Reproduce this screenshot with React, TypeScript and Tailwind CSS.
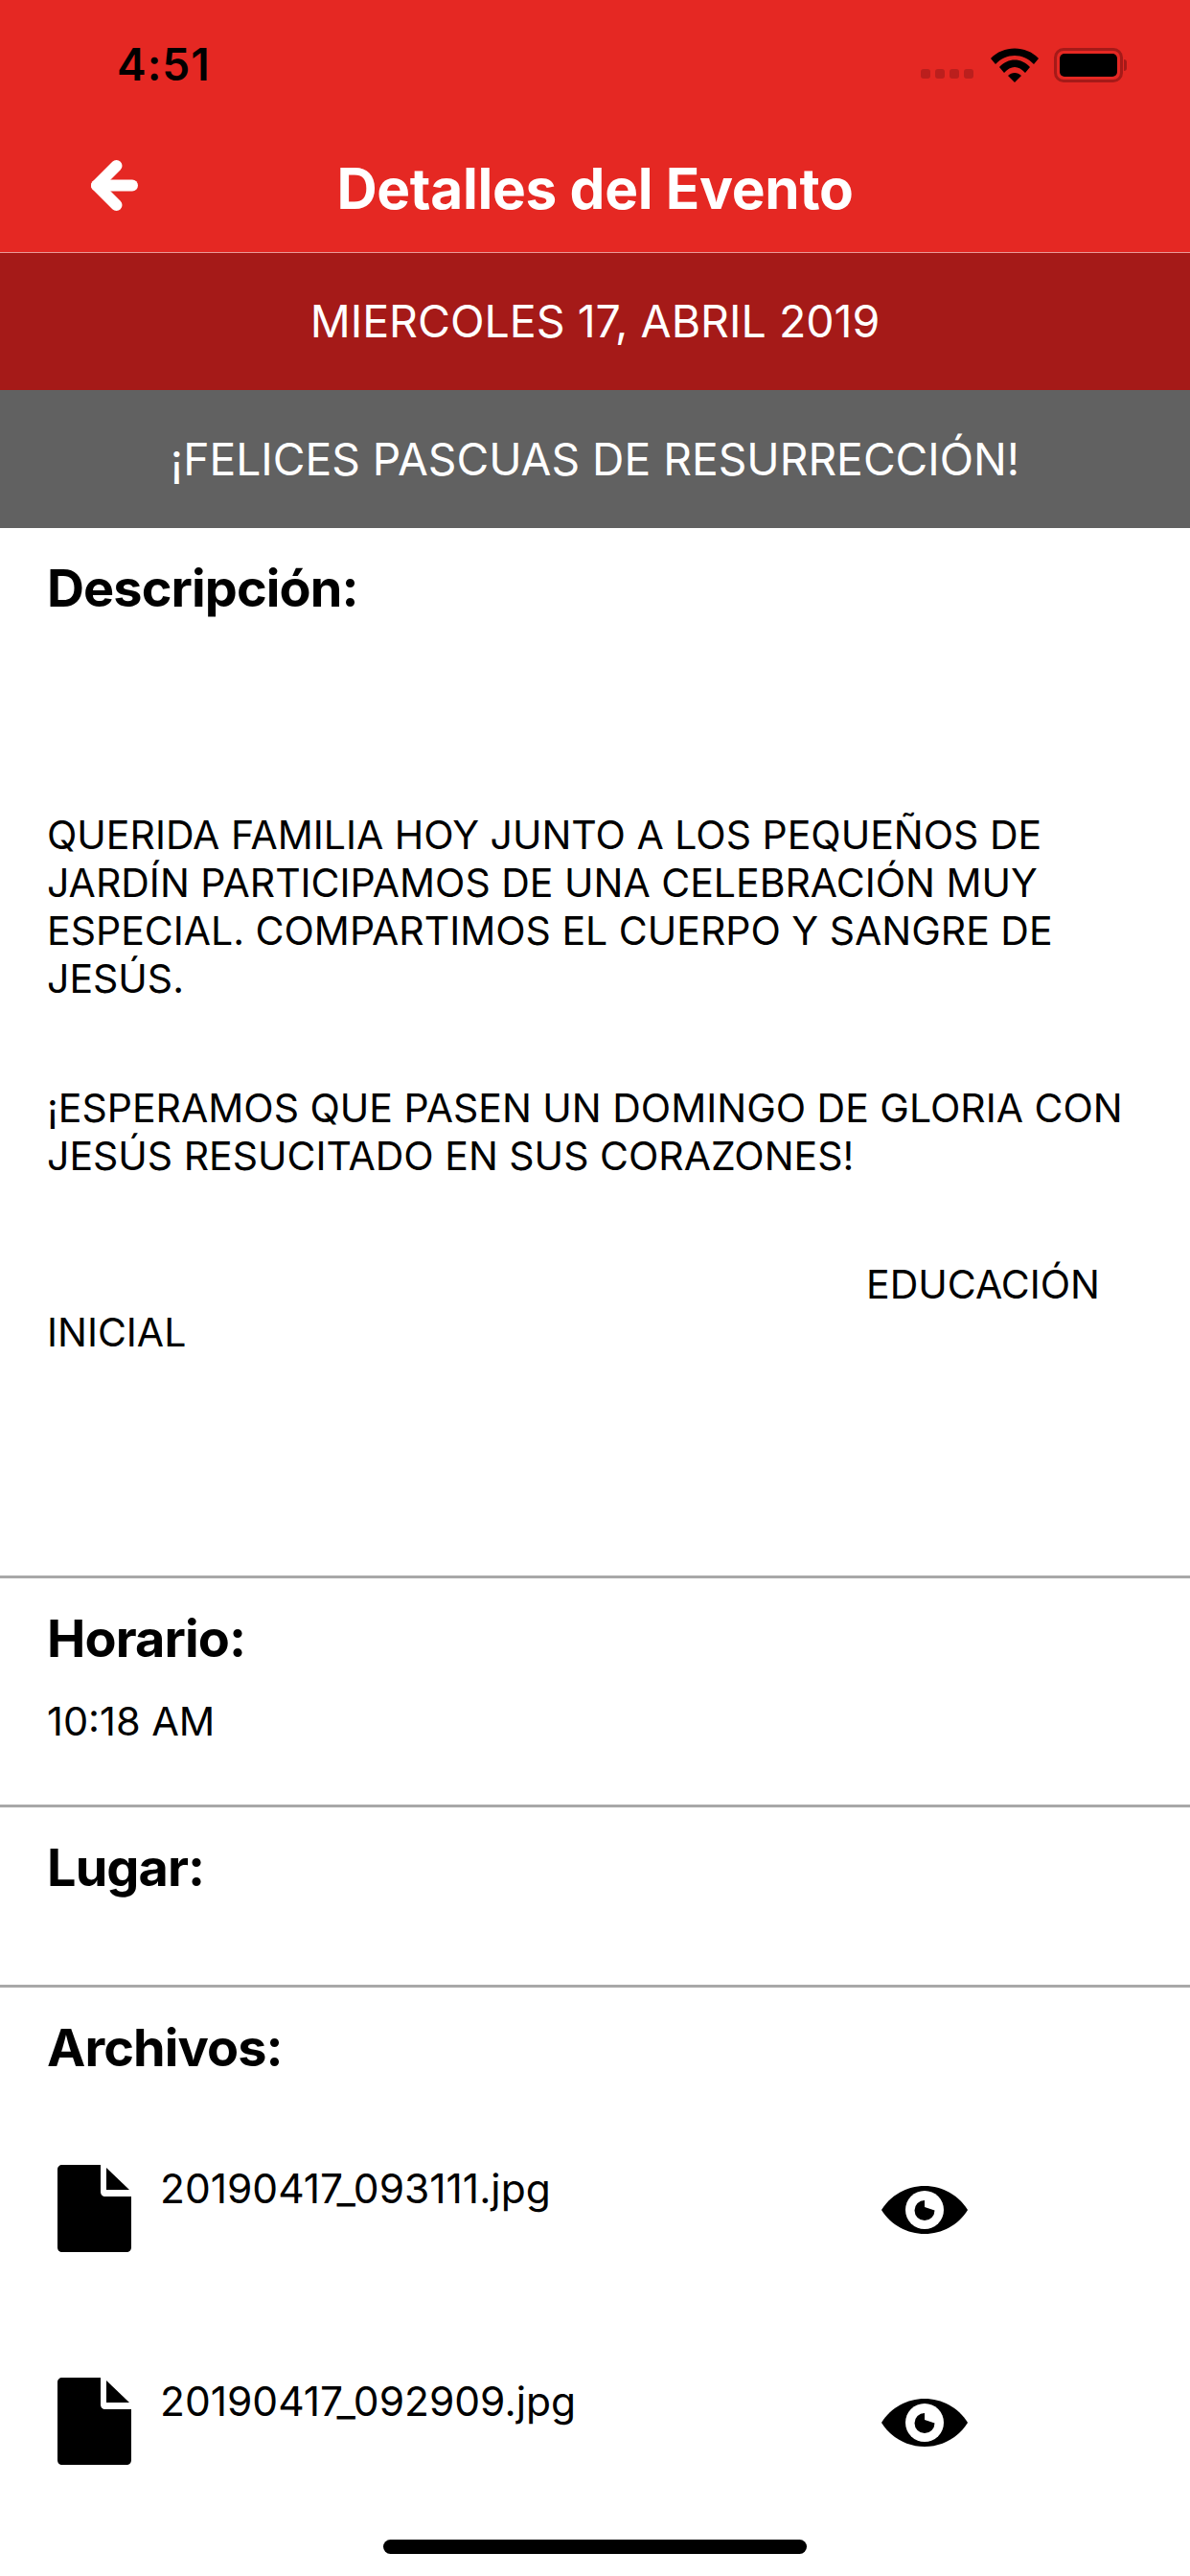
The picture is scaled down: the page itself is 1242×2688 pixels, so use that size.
import * as React from "react";

const font = { fontFamily: "Inter, 'Noto Sans', sans-serif" };

function FileIcon() {
  return (
    <svg width="77" height="91" viewBox="0 0 77 91" className="shrink-0">
      <path d="M5 0H45V28C45 31 47 33 50 33H77V86C77 89 75 91 72 91H5C2 91 0 89 0 86V5C0 2 2 0 5 0Z" fill="#000" />
      <path d="M51 3L75 26H51Z" fill="#000" />
    </svg>
  );
}

function EyeIcon() {
  return (
    <svg width="90" height="50" viewBox="0 0 90 50" className="shrink-0">
      <path d="M0 25C10 9 27 0 45 0C63 0 80 9 90 25C80 41 63 50 45 50C27 50 10 41 0 25Z" fill="#000" />
      <circle cx="45" cy="25" r="20" fill="#fff" />
      <path d="M45 15A10.500 10.500 0 1 0 55.500 25.500L45 22Z" fill="#000" />
    </svg>
  );
}

function Section({ title, className, children }: { title: string; className: string; children?: React.ReactNode }) {
  return (
    <section className={`border-b-[3px] border-[#a8a8a8] px-[49px] ${className}`}>
      <h3 className="text-[54px] leading-[60px] font-bold tracking-[-0.9px] text-black">{title}</h3>
      {children}
    </section>
  );
}

const files = ["20190417_093111.jpg", "20190417_092909.jpg"];

export default function App() {
  return (
    <div className="relative flex h-[2688px] w-[1242px] flex-col overflow-hidden bg-white" style={font}>
      <header className="h-[264px] shrink-0 border-b-[1px] border-[#e99a98] bg-[#e52823]">
        <div className="flex h-[135px] items-start justify-between pl-[122px] pr-[66px] pt-[38px]">
          <span className="text-[46px] leading-[58px] font-semibold tracking-[1px] text-black">4:51</span>
          <div className="flex items-center pt-[12px]">
            <div className="mr-[18px] mt-[18px] flex gap-[5px]">
              {[0, 1, 2, 3].map((i) => (
                <span key={i} className="h-[10px] w-[10px] rounded-[3px] bg-[#bb1f1d]" />
              ))}
            </div>
            <svg width="50" height="36" viewBox="0 0 50 36" className="mr-[16px]">
              <path d="M0 11C13 -3 37 -3 50 11L45 17C34 5 16 5 5 17Z" fill="#000" />
              <path d="M9 20C18 10 32 10 41 20L36 26C29 18 21 18 14 26Z" fill="#000" />
              <path d="M18 29C22 25 28 25 32 29L25 36Z" fill="#000" />
            </svg>
            <div className="flex items-center">
              <div className="flex h-[36px] w-[72px] rounded-[10px] border-[3px] border-[#a51a18] p-[3px]">
                <div className="h-full w-full rounded-[5px] bg-black" />
              </div>
              <div className="ml-[1px] h-[12px] w-[3px] rounded-r-[3px] bg-[#a51a18]" />
            </div>
          </div>
        </div>
        <div className="relative flex h-[128px] items-center justify-center pb-[4px]">
          <svg width="49" height="53" viewBox="0 0 49 53" className="absolute left-[95px] top-[32px]" fill="none" stroke="#fff" strokeWidth="12" strokeLinecap="round" strokeLinejoin="round">
            <path d="M26.500 6L6 26.500L26.500 47" />
            <path d="M6 26.500H43" />
          </svg>
          <h1 className="text-[58.500px] leading-[64px] font-bold tracking-[-0.3px] text-white">Detalles del Evento</h1>
        </div>
      </header>

      <div className="flex h-[143px] shrink-0 items-center justify-center bg-[#a51a18] pb-[2px]">
        <span className="text-[46.500px] leading-[54px] text-white">MIERCOLES 17, ABRIL 2019</span>
      </div>
      <div className="flex h-[144px] shrink-0 items-center justify-center bg-[#616161]">
        <span className="text-[46.200px] leading-[54px] text-white">¡FELICES PASCUAS DE RESURRECCIÓN!</span>
      </div>

      <Section title="Descripción:" className="h-[1096px] pt-[33px]">
        <div className="mt-[202px] text-[41px] leading-[50px] text-black">
          <p>
            QUERIDA FAMILIA HOY JUNTO A LOS PEQUEÑOS DE
            <br />
            JARDÍN PARTICIPAMOS DE UNA CELEBRACIÓN MUY
            <br />
            ESPECIAL. COMPARTIMOS EL CUERPO Y SANGRE DE
            <br />
            JESÚS.
          </p>
          <p className="mt-[85px]">
            ¡ESPERAMOS QUE PASEN UN DOMINGO DE GLORIA CON
            <br />
            JESÚS RESUCITADO EN SUS CORAZONES!
          </p>
          <p className="mt-[84px] pl-[855px]">EDUCACIÓN</p>
          <p>INICIAL</p>
        </div>
      </Section>

      <Section title="Horario:" className="h-[239px] pt-[33px]">
        <p className="mt-[31px] text-[41.500px] leading-[50px] text-black">10:18 AM</p>
      </Section>

      <Section title="Lugar:" className="h-[188px] pt-[33px]" />

      <section className="px-[49px] pt-[33px]">
        <h3 className="text-[54px] leading-[60px] font-bold tracking-[-0.9px] text-black">Archivos:</h3>
        <ul className="mt-[92px] flex flex-col gap-[132px]">
          {files.map((name) => (
            <li key={name} className="flex h-[90px] items-start pl-[11px]">
              <FileIcon />
              <span className="ml-[30px] w-[753px] text-[42.500px] leading-[50px] text-black">{name}</span>
              <span className="mt-[22px]">
                <EyeIcon />
              </span>
            </li>
          ))}
        </ul>
      </section>

      <div className="absolute bottom-[23px] left-[400px] h-[15px] w-[442px] rounded-full bg-black" />
    </div>
  );
}
